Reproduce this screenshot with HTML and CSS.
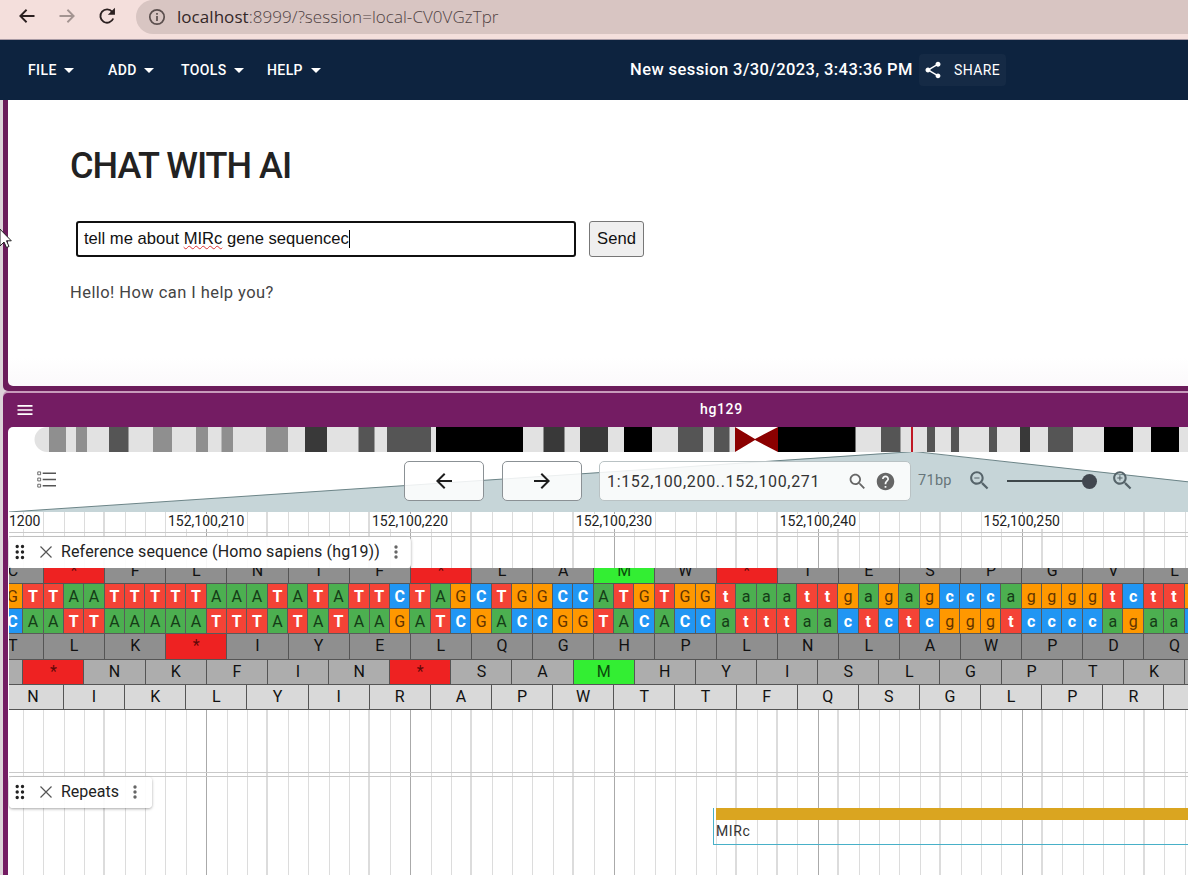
FILE: index.html
```html
<!DOCTYPE html>
<html lang="en">
<head>
<meta charset="utf-8">
<title>JBrowse</title>
<link rel="stylesheet" href="styles.css">
</head>
<body>
<div class="browser-bar">
  <svg class="nav-icon" viewBox="0 0 24 24"><path d="M21 12H4M11.500 4.500L4 12l7.500 7.500"/></svg>
  <svg class="nav-icon dim" viewBox="0 0 24 24"><path d="M3 12h17M12.500 4.500L20 12l-7.500 7.500"/></svg>
  <svg class="nav-icon reload" viewBox="0 0 24 24"><path d="M19.500 15A8 8 0 1 1 18.300 7"/><path class="solid" d="M21.500 2v8.500h-8.500z"/></svg>
  <div class="address">
    <svg class="info" viewBox="0 0 18 18"><circle cx="9" cy="9" r="7.200"/><path d="M9 8v5M9 5v1.800"/></svg>
    <span class="url"><b>localhost</b>:8999/?session=local-CV0VGzTpr</span>
  </div>
</div>
<nav class="app-bar">
  <div class="menu file">FILE<i></i></div>
  <div class="menu add">ADD<i></i></div>
  <div class="menu tools">TOOLS<i></i></div>
  <div class="menu help">HELP<i></i></div>
  <div class="session">New session 3/30/2023, 3:43:36 PM</div>
  <div class="share">
    <svg viewBox="0 0 24 24"><path d="M18 16.080c-.76 0-1.440.3-1.960.77L8.910 12.700c.05-.23.090-.46.090-.7s-.04-.47-.09-.7l7.050-4.110c.54.5 1.250.81 2.040.81 1.660 0 3-1.340 3-3s-1.340-3-3-3-3 1.340-3 3c0 .24.040.47.090.7L8.040 9.810C7.500 9.310 6.790 9 6 9c-1.660 0-3 1.340-3 3s1.340 3 3 3c.79 0 1.500-.31 2.040-.81l7.120 4.160c-.05.21-.08.43-.08.65 0 1.610 1.310 2.920 2.920 2.920s2.920-1.310 2.920-2.920-1.310-2.920-2.920-2.920z"/></svg>
    SHARE
  </div>
</nav>
<main class="workspace">
  <section class="chat-frame">
    <div class="chat">
      <h1>CHAT WITH AI</h1>
      <div class="prompt">
        <div class="prompt-input">tell me about <u>MIRc</u> gene sequencec<span class="caret"></span></div>
        <button class="send">Send</button>
      </div>
      <p>Hello! How can I help you?</p>
    </div>
  </section>
  <section class="view-frame">
    <header class="view-header">
      <svg viewBox="0 0 24 24"><path d="M3 18h18v-2H3v2zm0-5h18v-2H3v2zm0-7v2h18V6H3z"/></svg>
      <span>hg129</span>
    </header>
    <div class="view">
      <svg class="ideogram" id="ideogram" width="1180" height="25" viewBox="8 427 1180 25"></svg>
      <div class="controls">
        <svg class="wedge" width="1180" height="60" viewBox="8 452 1180 60"><path class="fill" d="M9 512L911 451.500L1188 481.500V512z"/><path class="edge" d="M9 512L911 451.800M914 451.500L1188 481.800"/></svg>
        <svg class="selector" viewBox="0 0 20 20"><path d="M6 3.500h14M6 10h14M6 16.500h14"/><path class="thin" d="M.8 2h3v3h-3zM.8 8.500h3v3h-3zM.8 15h3v3h-3z"/></svg>
        <button class="pan back"><svg viewBox="0 0 24 24"><path d="M20 11H7.830l5.590-5.590L12 4l-8 8 8 8 1.410-1.410L7.830 13H20v-2z"/></svg></button>
        <button class="pan"><svg viewBox="0 0 24 24"><path d="M12 4l-1.410 1.410L16.170 11H4v2h12.170l-5.580 5.590L12 20l8-8z"/></svg></button>
        <div class="location">
          <span>1:152,100,200..152,100,271</span>
          <svg class="search" viewBox="0 0 24 24"><path d="M15.500 14h-.79l-.28-.27C15.410 12.590 16 11.110 16 9.500 16 5.910 13.090 3 9.500 3S3 5.910 3 9.500 5.910 16 9.500 16c1.610 0 3.090-.59 4.230-1.570l.27.28v.79l5 4.990L20.490 19l-4.990-5zm-6 0C7.010 14 5 11.990 5 9.500S7.010 5 9.500 5 14 7.010 14 9.500 11.990 14 9.500 14z"/></svg>
          <svg class="help-icon" viewBox="0 0 24 24"><path d="M12 2C6.480 2 2 6.480 2 12s4.480 10 10 10 10-4.480 10-10S17.520 2 12 2zm1 17h-2v-2h2v2zm2.070-7.750l-.9.920C13.450 12.900 13 13.500 13 15h-2v-.5c0-1.100.45-2.100 1.170-2.830l1.240-1.260c.37-.36.590-.86.590-1.410 0-1.100-.9-2-2-2s-2 .9-2 2H8c0-2.210 1.790-4 4-4s4 1.790 4 4c0 .88-.36 1.680-.93 2.250z"/></svg>
        </div>
        <span class="bp">71bp</span>
        <svg class="zoom" viewBox="0 0 24 24"><path d="M15.500 14h-.79l-.28-.27C15.410 12.590 16 11.110 16 9.500 16 5.910 13.090 3 9.500 3S3 5.910 3 9.500 5.910 16 9.500 16c1.610 0 3.090-.59 4.230-1.570l.27.28v.79l5 4.990L20.490 19l-4.990-5zm-6 0C7.010 14 5 11.990 5 9.500S7.010 5 9.500 5 14 7.010 14 9.500 11.990 14 9.500 14zM7 9h5v1H7z"/></svg>
        <div class="slider"><i></i></div>
        <svg class="zoom" viewBox="0 0 24 24"><path d="M15.500 14h-.79l-.28-.27C15.410 12.590 16 11.110 16 9.500 16 5.910 13.090 3 9.500 3S3 5.910 3 9.500 5.910 16 9.500 16c1.610 0 3.090-.59 4.230-1.570l.27.28v.79l5 4.990L20.490 19l-4.990-5zm-6 0C7.010 14 5 11.990 5 9.500S7.010 5 9.500 5 14 7.010 14 9.500 11.990 14 9.500 14zM9 7h1v2h2v1h-2v2H9v-2H7V9h2z"/></svg>
      </div>
      <div class="tracks">
        <svg class="grid" id="grid" width="1179" height="363" viewBox="9 512 1179 363"></svg>
        <div class="ruler"><span class="first">1200</span><span>152,100,210</span><span>152,100,220</span><span>152,100,230</span><span>152,100,240</span><span>152,100,250</span></div>
        <div class="divider"></div>
        <div class="track-label wide"><svg class="drag" viewBox="0 0 10 16"><path d="M2.200 2.500h.01M7.500 2.500h.01M2.200 8h.01M7.500 8h.01M2.200 13.500h.01M7.500 13.500h.01"/></svg><svg class="close" viewBox="0 0 12 12"><path d="M.5.5l11 11M11.500.5l-11 11"/></svg><span>Reference sequence (Homo sapiens (hg19))</span><svg class="more" viewBox="0 0 4 14"><path d="M2 2h.01M2 7h.01M2 12h.01"/></svg></div>
        <div class="sequence" id="sequence"></div>
        <div class="divider second"></div>
        <div class="track-label small"><svg class="drag" viewBox="0 0 10 16"><path d="M2.200 2.500h.01M7.500 2.500h.01M2.200 8h.01M7.500 8h.01M2.200 13.500h.01M7.500 13.500h.01"/></svg><svg class="close" viewBox="0 0 12 12"><path d="M.5.5l11 11M11.500.5l-11 11"/></svg><span>Repeats</span><svg class="more" viewBox="0 0 4 14"><path d="M2 2h.01M2 7h.01M2 12h.01"/></svg></div>
        <div class="feature"><div class="feature-bar"></div><span>MIRc</span></div>
      </div>
    </div>
  </section>
</main>
<svg class="cursor" width="13" height="22" viewBox="0 0 13 22"><path d="M-4-4L11.300 11.800H6.500L9 17.500 6.500 18.500 4 13 0 17V0z"/></svg>
<script src="view.js"></script>
</body>
</html>
```

FILE: styles.css
```css
* { box-sizing: border-box; }
body { margin: 0; width: 1188px; height: 875px; overflow: hidden; position: relative; background: #ddd3d9; font-family: Roboto, "Liberation Sans", sans-serif; color: #222; }
svg { flex: none; }

.browser-bar { height: 40px; display: flex; background: #f4dfdc; border-bottom: 1px solid #a89aa4; padding-left: 17px; }
.nav-icon { width: 20px; height: 20px; margin: 6px 20px 0 0; fill: none; stroke: #2b2020; stroke-width: 2.200; }
.nav-icon.dim { stroke: #a39491; }
.nav-icon.reload { margin-right: 19px; }
.nav-icon .solid { fill: #2b2020; stroke: none; }
.address { flex: 1; height: 34px; background: #d8c5c2; border-radius: 17px 0 0 17px; display: flex; align-items: center; padding-left: 12px; }
.info { width: 18px; height: 18px; fill: none; stroke: #5b4f4e; stroke-width: 1.700; }
.url { margin-left: 11px; font: 300 17px/24px "Open Sans", sans-serif; color: #4f4243; white-space: nowrap; letter-spacing: .05px; }
.url b { font-weight: 400; color: #332728; }

.app-bar { height: 60px; background: #0d233f; color: #fff; display: flex; align-items: center; padding-left: 28px; font-size: 14px; font-weight: 500; letter-spacing: .4px; }
.menu { display: flex; align-items: center; justify-content: space-between; }
.menu i { border: 5px solid transparent; border-top-color: #fff; border-bottom: 0; }
.file { width: 46px; margin-right: 34px; }
.add { width: 46px; margin-right: 27px; }
.tools { width: 63px; margin-right: 23px; }
.help { width: 54px; margin-right: 309px; }
.session { width: 289px; font-size: 16.500px; white-space: nowrap; letter-spacing: .42px; padding-bottom: 1px; }
.share { width: 87px; height: 32px; border-radius: 4px; background: #152a45; display: flex; align-items: center; gap: 11px; padding-left: 4px; font-weight: 400; }
.share svg { width: 20px; fill: #fff; }

.workspace { padding-left: 3px; }
.chat-frame { height: 291px; background: #6b1c5b; padding: 0 0 5px 5px; border-radius: 0 0 0 5px; }
.chat { height: 286px; background: linear-gradient(#fff 90%, #fbf9fb); border-radius: 0 0 0 5px; padding: 44px 0 0 62px; }
.chat h1 { margin: 0; font-size: 36px; line-height: 44px; font-weight: 500; letter-spacing: -.98px; }
.prompt { display: flex; gap: 13px; padding: 33px 0 0 6px; }
.prompt-input { width: 500px; height: 36px; border: 2px solid #101010; border-radius: 3px; padding: 0 6px; font: 16.600px/31px "Liberation Sans", sans-serif; color: #111; white-space: nowrap; }
.prompt-input u { text-decoration: underline wavy #d33 1px; text-underline-offset: 1px; text-decoration-skip-ink: none; }
.caret { display: inline-block; width: 1px; height: 18px; background: #000; vertical-align: -4px; }
.send { width: 55px; height: 36px; border: 1px solid #777; border-radius: 3px; background: #efefef; font: 16.600px "Liberation Sans", sans-serif; padding: 0; color: #111; }
.chat p { margin: 26px 0 0; font-size: 16.500px; line-height: 20px; letter-spacing: .43px; color: #444; }

.view-frame { margin-top: 2px; height: 482px; background: #741c63; border-radius: 5px 0 0 0; padding-left: 5px; box-shadow: 0 -2px 0 #c79bbb; }
.view-header { height: 34px; display: flex; align-items: center; padding-left: 7px; color: #fff; font-size: 14px; font-weight: 500; }
.view-header svg { width: 20px; fill: #fff; }
.view-header span { margin: -3px 0 0 665px; letter-spacing: .65px; }
.view { width: 1180px; height: 448px; background: #fff; border-radius: 5px 0 0 0; overflow: hidden; }
.ideogram { display: block; }
.controls { height: 60px; display: flex; align-items: center; position: relative; padding: 0 0 2px 29px; }
.controls > * { position: relative; }
.controls > .wedge { position: absolute; left: 0; top: 0; }
.wedge .fill { fill: #c6d5d8; }
.wedge .edge { fill: none; stroke: #60797d; stroke-width: .9; }
.selector { width: 19px; height: 19px; margin-bottom: 3px; fill: none; stroke: #555; stroke-width: 1.500; }
.selector .thin { stroke-width: .9; }
.pan { width: 80px; height: 40px; margin-right: 18px; border: 1px solid #8b9195; border-radius: 5px; background: rgba(255,255,255,.87); padding: 0; display: flex; align-items: center; justify-content: center; }
.pan.back { margin-left: 348px; }
.pan + .location { margin-left: -1px; }
.pan svg { width: 24px; fill: #1d1d1d; }
.location { width: 312px; height: 40px; border: 1px solid #b9c2c4; border-radius: 5px; background: rgba(255,255,255,.87); display: flex; align-items: center; padding-left: 7px; font-size: 16px; color: #333; }
.location span { width: 240px; letter-spacing: .67px; white-space: nowrap; }
.location svg { width: 21px; fill: #666; }
.location .help-icon { margin-left: 7px; }
.bp { width: 49px; margin: 0 0 2px 7px; font-size: 14.500px; color: #66757a; letter-spacing: .3px; }
.zoom { width: 25px; fill: #56646a; margin-bottom: 2px; }
.slider { width: 82px; height: 2px; margin: 0 21px 0 15px; background: #3e474b; display: flex; align-items: center; }
.slider i { flex: none; width: 15px; height: 15px; border-radius: 50%; margin-left: 75px; background: #41474f; }

.tracks { position: relative; margin-left: 1px; height: 363px; }
.grid { position: absolute; left: 0; top: 0; }
.ruler, .divider, .track-label, .sequence, .feature { position: relative; }
.ruler { display: flex; height: 20px; padding-top: 2px; font-size: 14px; line-height: 15px; color: #222; }
.ruler span { flex: none; width: 76px; margin-right: 127.900px; background: #fff; text-align: center; height: 15px; white-space: nowrap; }
.ruler .first { width: 32px; margin-right: 127px; text-align: left; }
.divider { height: 5px; border-top: 1px solid #c9c9c9; border-bottom: 1px solid #c9c9c9; }
.track-label { height: 31px; border-radius: 4px; background: rgba(255,255,255,.9); box-shadow: 0 1px 3px rgba(0,0,0,.35); display: flex; align-items: center; font-size: 16px; color: #222; white-space: nowrap; padding-bottom: 1px; }
.track-label.wide { width: 402px; }
.track-label.wide span { letter-spacing: .14px; }
.track-label.small { width: 143px; }
.track-label span { margin: 0 0 2px 9.500px; }
.drag { width: 10px; height: 16px; margin-left: 5.500px; }
.drag path, .more path { fill: none; stroke: #222; stroke-width: 3.400; stroke-linecap: round; }
.close { width: 12px; height: 12px; margin-left: 15px; stroke: #555; stroke-width: 1.200; }
.more { width: 4px; height: 14px; margin-left: 14px; }
.more path { stroke: #666; }
.sequence { height: 142px; overflow: hidden; }
.seq-row { display: flex; height: 25.150px; }
.seq-row:first-child { margin-top: -9px; }
.seq-row div { flex: none; height: 100%; border-right: 1px solid #555; border-bottom: 1px solid #555; text-align: center; font-size: 16px; line-height: 24px; color: #111; }
.seq-row .base { width: 20.385px; line-height: 26px; border-color: #5a5a5a; }
.codon { width: 61.155px; }
.dark .codon { background: #8f8f8f; }
.mid .codon { background: #adadad; }
.light .codon { background: #d9d9d9; }
.seq-row .stop { background: #ee2222; color: #5f0808; }
.seq-row .start { background: #33ee33; color: #0b4b0b; }
.seq-row .a { background: #4caf50; color: #153c17; }
.seq-row .c { background: #2196f3; color: #fff; font-weight: 700; }
.seq-row .g { background: #ff9800; color: #633400; }
.seq-row .t { background: #f44336; color: #fff; font-weight: 700; }
.divider.second { margin-top: 62px; }
.feature { margin-left: 704px; height: 37px; border-left: 1px solid #48b0c8; border-bottom: 1px solid #48b0c8; padding-left: 2px; font-size: 14px; color: #333; }
.feature-bar { height: 12px; background: #daa520; }
.feature span { display: block; line-height: 22px; letter-spacing: .6px; }
.cursor { position: absolute; left: 0; top: 229px; fill: #fff; stroke: #222; stroke-width: 1; }
```

FILE: view.js
```js
const NS = 'http://www.w3.org/2000/svg';
function shape(parent, tag, attrs) {
  const el = document.createElementNS(NS, tag);
  for (const key in attrs) el.setAttribute(key, attrs[key]);
  parent.appendChild(el);
}

// Cytogenetic bands: [start, end, stain]
const ideogram = document.getElementById('ideogram');
shape(ideogram, 'path', { d: 'M735 427H47a12.5 12.5 0 0 0 0 25H735zM778 427H1188V452H778z', fill: '#e2e2e2' });
[[49,66,'#8f8f8f'],[76,87,'#8f8f8f'],[109,128.500,'#555'],[153,172,'#8f8f8f'],[196,208,'#8f8f8f'],[221.500,233,'#8f8f8f'],
 [266,288,'#8f8f8f'],[305,327,'#393939'],[358.500,374.500,'#555'],[387,431,'#555'],[436,523,'#000'],[543.500,564.500,'#393939'],
 [580,608,'#393939'],[624,652,'#000'],[678,703,'#555'],[714,729.500,'#555'],[778,855.500,'#000'],[881,900.500,'#555'],
 [927,935,'#555'],[951,959,'#555'],[989,997,'#555'],[1020,1030,'#393939'],[1048,1073,'#555'],[1104,1133,'#000'],[1151,1179,'#000']
].forEach(([a, b, fill]) => shape(ideogram, 'rect', { x: a, y: 427, width: b - a, height: 25, fill }));
shape(ideogram, 'path', { d: 'M735 427L755 439L778 427V452L755 440L735 452z', fill: '#8b0000' });
shape(ideogram, 'rect', { x: 911, y: 427, width: 2, height: 25, fill: '#c01824' });

// Vertical gridlines, one per base
const grid = document.getElementById('grid');
const wide = new Set([4, 12, 17, 22, 27, 35, 37, 40, 45, 50, 55]);
for (let i = 0; i < 58; i++) {
  const major = i % 10 === 9;
  const x = Math.floor(23.300 + i * 20.385) - (wide.has(i) && !major ? 0.5 : 0);
  shape(grid, 'rect', { x: wide.has(i) ? Math.floor(x) : x, y: 512, width: wide.has(i) ? 2 : 1, height: 363, fill: major ? '#aaa' : '#dcdcdc' });
}

const sequence = document.getElementById('sequence');
function addRow(kind, offset, letters, cls) {
  const row = document.createElement('div');
  row.className = 'seq-row ' + kind;
  for (const ch of letters) {
    const cell = document.createElement('div');
    cell.className = cls(ch);
    cell.textContent = ch;
    row.appendChild(cell);
  }
  row.firstChild.style.marginLeft = offset + 'px';
  sequence.appendChild(row);
}
const codon = ch => 'codon' + (ch === '*' ? ' stop' : ch === 'M' ? ' start' : '');
const base = ch => 'base ' + ch.toLowerCase();
const dna = 'GTTAATTTTTAAATATATTCTAGCTGGCCATGTGGtaaattgagagcccaggggtcttg';
const pair = { A: 'T', T: 'A', G: 'C', C: 'G', a: 't', t: 'a', g: 'c', c: 'g' };
addRow('dark', -26.200, 'C*FLNIF*LAMW*IESPGVL', codon);
addRow('', -6.200, dna, base);
addRow('', -6.200, [...dna].map(c => pair[c]).join(''), base);
addRow('dark', -26.200, 'TLK*IYELQGHPLNLAWPDQ', codon);
addRow('mid', -46.800, ' *NKFIN*SAMHYISLGPTK ', codon);
addRow('light', -6.200, 'NIKLYIRAPWTTFQSGLPR ', codon);
```
